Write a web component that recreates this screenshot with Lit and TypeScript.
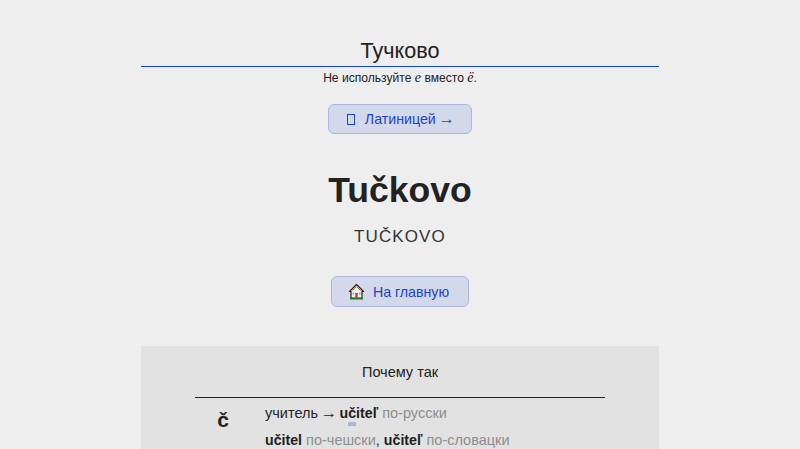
import { LitElement, html, css } from "lit";
import { customElement } from "lit/decorators.js";

@customElement("app-root")
export class AppRoot extends LitElement {
  static styles = css`
    :host { display: block; height: 449px; overflow: hidden; background: #eeeeee; font-family: "Liberation Sans", Arial, sans-serif; color: #222; }
    .col { width: 518px; margin: 0 auto; display: flex; flex-direction: column; align-items: center; padding-top: 37px; }
    .field { width: 100%; height: 30px; box-sizing: border-box; border-bottom: 1px solid #1746d8; text-align: center; font-size: 21.6px; line-height: 28px; color: #222; }
    .note { font-size: 12.100px; line-height: 14px; margin-top: 4px; color: #222; }
    .note i { font-family: "Liberation Serif", serif; font-size: 14px; color: #111; }
    .btn { display: flex; align-items: center; justify-content: center; box-sizing: border-box; background: #d3d8ea; border: 1px solid #aab6e0; border-radius: 6px; color: #1a44d0; font-size: 14.200px; white-space: nowrap; }
    .b1 { width: 144px; height: 30px; margin-top: 19px; gap: 9px; }
    .arrow { font-size: 16.500px; line-height: 14px; margin: 0 -1.500px; }
    .tofu { width: 6px; height: 9px; border: 1px solid #1a44d0; box-sizing: content-box; margin-right: 1px; }
    .title { font-size: 35.6px; font-weight: 700; line-height: 42px; margin-top: 35px; color: #222; }
    .latin { font-size: 17px; line-height: 20px; margin-top: 16px; letter-spacing: 1.100px; color: #333; }
    .b2 { width: 138px; height: 31px; margin-top: 29px; gap: 8px; padding-right: 2px; }
    .b2 svg { display: block; margin-left: -1px; }
    .panel { width: 100%; margin-top: 39px; background: #e2e2e2; padding: 18px 54px 0; box-sizing: border-box; height: 200px; }
    .ph { font-size: 14.500px; line-height: 16px; text-align: center; color: #222; padding-bottom: 17px; border-bottom: 1px solid #222; }
    .row { display: grid; grid-template-columns: 70px 1fr; font-size: 14.500px; padding-top: 7px; }
    .let { font-size: 21px; font-weight: 700; line-height: 28px; text-align: center; padding-right: 14px; padding-top: 1px; }
    .line { line-height: 16px; margin-bottom: 11px; color: #222; white-space: nowrap; }
    .line em { font-style: normal; color: #8e8e8e; }
    b { color: #1e1e1e; font-size: 14.200px; }
    .u { background: linear-gradient(#abb5dd, #abb5dd) no-repeat 0 100% / 100% 4px; padding-bottom: 5px; }
  `;
  render() {
    return html`<div class="col">
      <div class="field">Тучково</div>
      <div class="note">Не используйте <i>е</i> вместо <i>ё</i>.</div>
      <div class="btn b1"><span class="tofu"></span><span>Латиницей <span class="arrow">→</span></span></div>
      <div class="title">Tučkovo</div>
      <div class="latin">TUČKOVO</div>
      <div class="btn b2">
        <svg width="17" height="17" viewBox="0 0 17 17">
          <path d="M8.500 1.500 15.500 8.500H14V15H3V8.500H1.500Z" fill="#f6f1ea" stroke="#2a1c1c" stroke-width="1.200" stroke-linejoin="round"/>
          <path d="M4.500 7.500 8.500 3.500 12.500 7.500" fill="none" stroke="#b5705a" stroke-width="1"/>
          <rect x="7.300" y="10" width="2.400" height="5" fill="#d8323a"/>
          <rect x="4.400" y="9.500" width="1.800" height="2" fill="#6ab0e8"/>
          <rect x="10.800" y="9.500" width="1.800" height="2" fill="#6ab0e8"/>
          <rect x="2" y="15" width="13" height="1.500" fill="#16802c"/>
        </svg>
        <span>На главную</span>
      </div>
      <div class="panel">
        <div class="ph">Почему так</div>
        <div class="row">
          <div class="let">č</div>
          <div>
            <div class="line">учитель <span class="arrow">→</span> <b>u<span class="u">č</span>iteľ</b> <em>по-русски</em></div>
            <div class="line"><b>u<span class="u">č</span>itel</b> <em>по-чешски</em>, <b>u<span class="u">č</span>iteľ</b> <em>по-словацки</em></div>
          </div>
        </div>
      </div>
    </div>`;
  }
}
